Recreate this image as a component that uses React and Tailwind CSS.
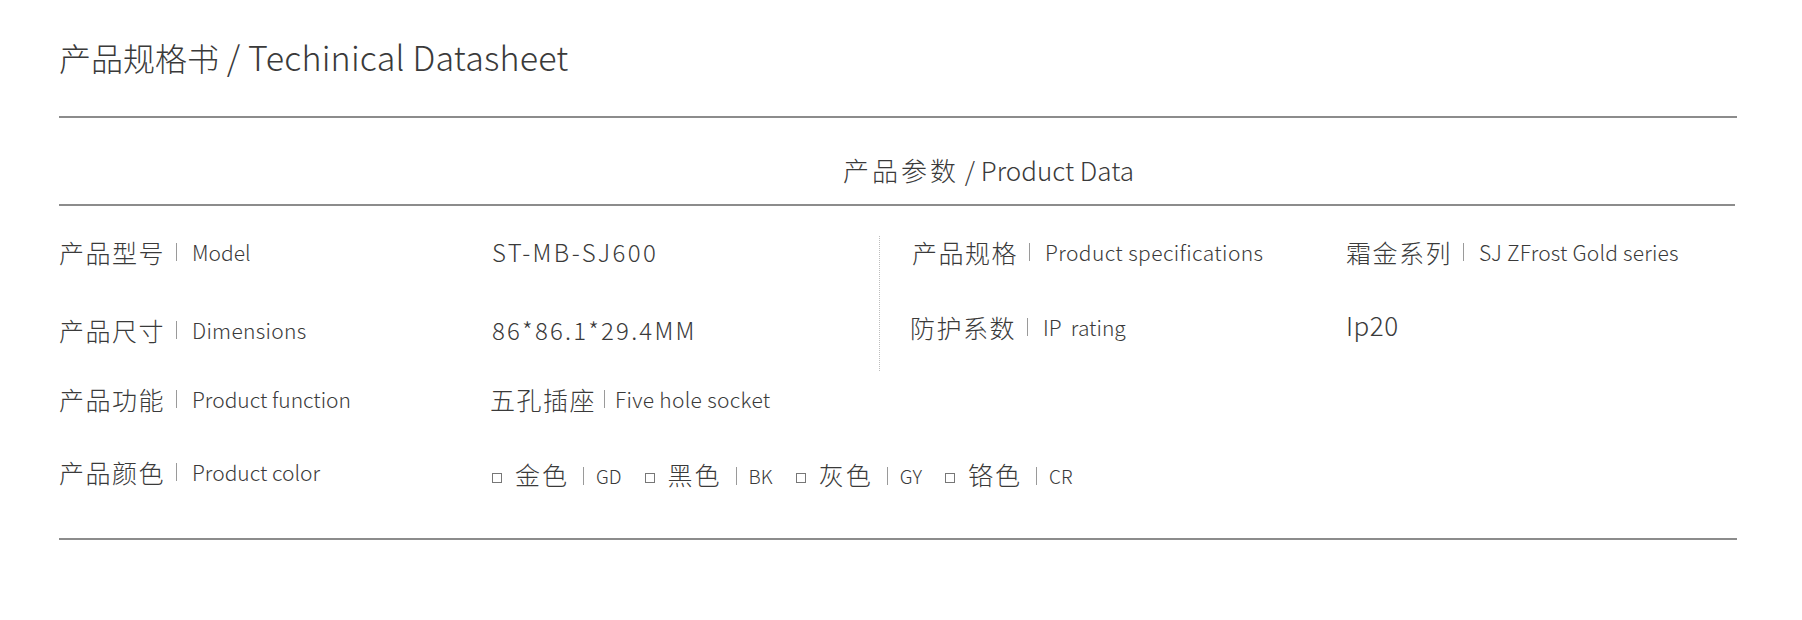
import React from "react";

function Sep({ className = "" }) {
  return <span className={"inline-block w-px h-[18px] bg-[#9a9a9a] " + className} />;
}

function Label({ cn, en, enClass = "" }) {
  return (
    <div className="flex items-center">
      <span className="text-[25px] tracking-[1.5px] leading-[32px]">{cn}</span>
      <Sep className="ml-[11px] mr-[15px]" />
      <span className={"text-[21px] leading-[32px] " + enClass}>{en}</span>
    </div>
  );
}

function ColorOpt({ cn, code, first }) {
  return (
    <div className={"flex items-center " + (first ? "" : "ml-[23px]")}>
      <span className="inline-block w-[10px] h-[10px] border border-[#777] mt-[8px]" />
      <span className="ml-[13px] text-[25px] tracking-[2px] leading-[32px]">{cn}</span>
      <Sep className="ml-[14px] mr-[12px] mt-[4px]" />
      <span className="text-[19px] leading-[32px] mt-[4px]">{code}</span>
    </div>
  );
}

export default function App() {
  return (
    <div className="w-[1802px] h-[620px] bg-white text-[#3a3a3a] font-light font-['Noto_Sans_CJK_SC','Noto_Sans',sans-serif]">
      <div className="ml-[59px] w-[1678px] pt-[37px]">
        <h1 className="text-[32px] leading-[40px] h-[40px] font-light whitespace-nowrap">
          <span>产品规格书</span>
          <span className="text-[34px] tracking-[0.2px]"> / Techinical Datasheet</span>
        </h1>
        <div className="mt-[39px] h-[2px] bg-[#8c8c8c]" />
        <div className="pt-[34px] pb-[16px] pl-[784px] text-[26px] leading-[36px]">
          <span className="tracking-[3px]">产品参数</span>
          <span> / Product Data</span>
        </div>
        <div className="h-[2px] bg-[#8c8c8c] w-[1676px]" />

        <div className="flex mt-[26px]">
          <div className="w-[820px] flex flex-col">
            <div className="flex items-center h-[40px]">
              <div className="w-[433px]">
                <Label cn="产品型号" en="Model" />
              </div>
              <div className="text-[24px] tracking-[2.4px] leading-[32px]">ST-MB-SJ600</div>
            </div>
            <div className="flex items-center h-[40px] mt-[38px]">
              <div className="w-[433px]">
                <Label cn="产品尺寸" en="Dimensions" enClass="tracking-[0.3px]" />
              </div>
              <div className="text-[24px] tracking-[2.2px] leading-[32px]">86*86.1*29.4MM</div>
            </div>
          </div>
          <div className="mt-[4px] h-[135px] border-l border-dotted border-[#bdbdbd] pl-[32px] flex flex-col">
            <div className="flex items-center h-[32px]">
              <div className="w-[434px]">
                <Label cn="产品规格" en="Product specifications" enClass="tracking-[0.4px]" />
              </div>
              <Label cn="霜金系列" en="SJ ZFrost Gold series" enClass="tracking-[0.2px]" />
            </div>
            <div className="flex items-center h-[32px] mt-[43px] -ml-[2px]">
              <div className="w-[436px]">
                <Label cn="防护系数" en={"IP\u00a0 rating"} />
              </div>
              <div className="text-[26px] leading-[32px] -mt-[4px] tracking-[0.5px]">Ip20</div>
            </div>
          </div>
        </div>

        <div className="flex items-center h-[40px] mt-[8px]">
          <div className="w-[433px]">
            <Label cn="产品功能" en="Product function" />
          </div>
          <div className="flex items-center -ml-[2px]">
            <span className="text-[25px] leading-[32px] tracking-[1.5px]">五孔插座</span>
            <Sep className="ml-[8px] mr-[10px]" />
            <span className="text-[21px] leading-[32px] tracking-[0.3px]">Five hole socket</span>
          </div>
        </div>

        <div className="flex items-center h-[40px] mt-[33px]">
          <div className="w-[433px]">
            <Label cn="产品颜色" en="Product color" />
          </div>
          <div className="flex items-center mt-[4px]">
            <ColorOpt cn="金色" code="GD" first />
            <ColorOpt cn="黑色" code="BK" />
            <ColorOpt cn="灰色" code="GY" />
            <ColorOpt cn="铬色" code="CR" />
          </div>
        </div>

        <div className="mt-[46px] h-[2px] bg-[#8c8c8c]" />
      </div>
    </div>
  );
}
